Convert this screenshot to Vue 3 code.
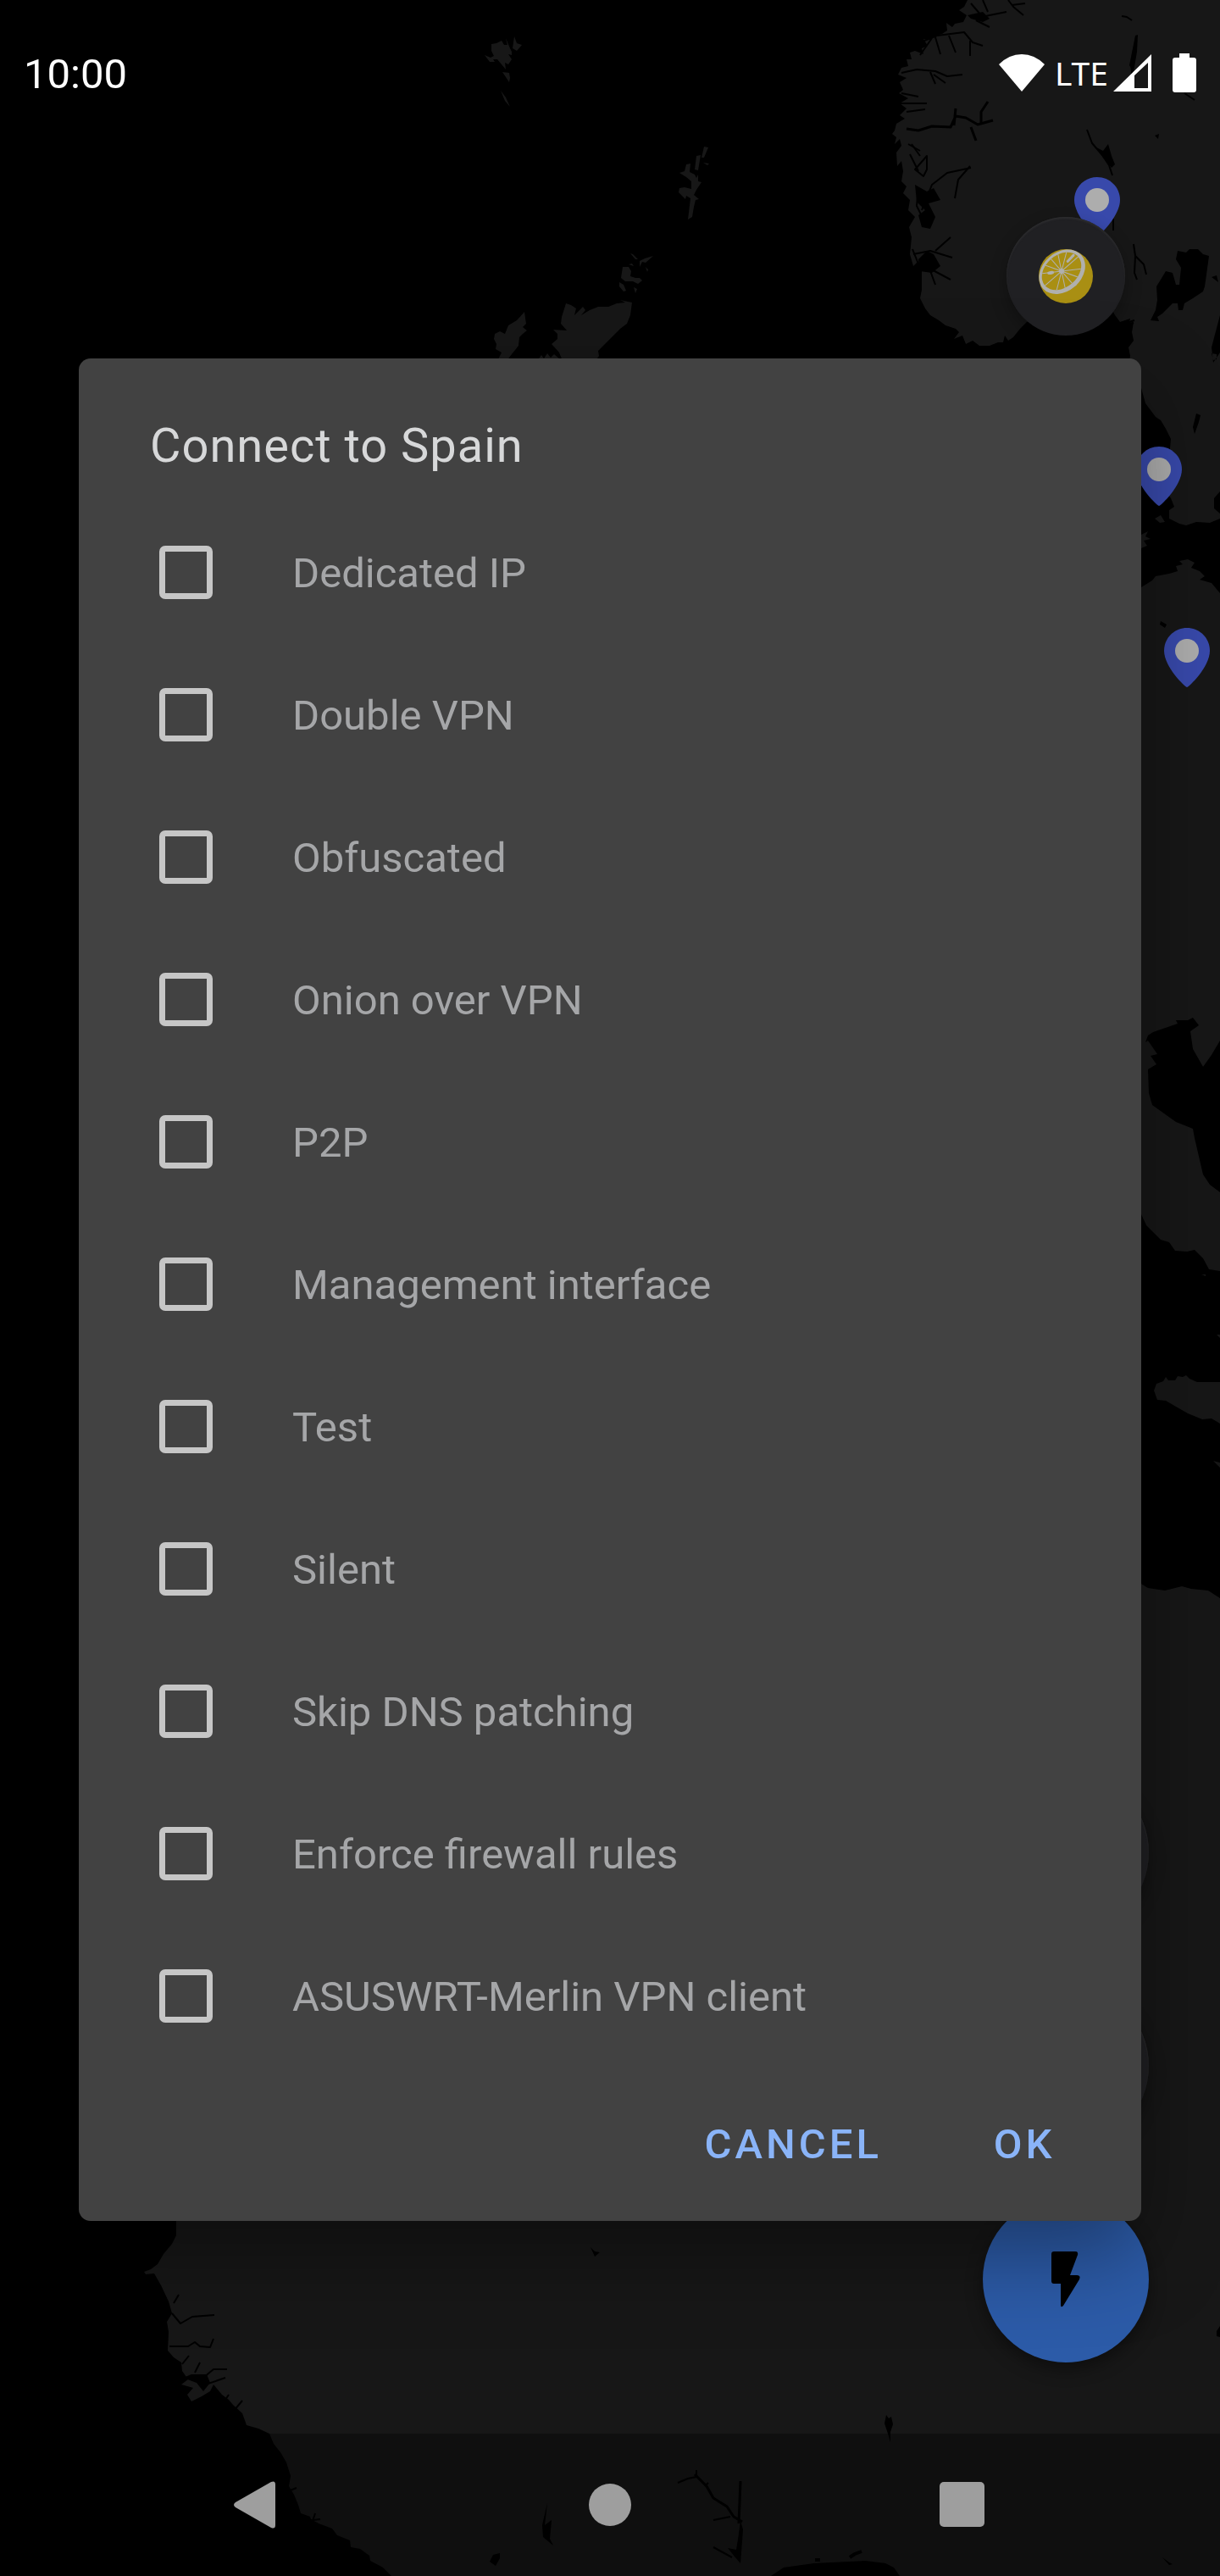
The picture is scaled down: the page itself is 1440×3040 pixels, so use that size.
<script setup>
import { ref } from 'vue'

const options = ref([
  { id: 'dedicated-ip', label: 'Dedicated IP', checked: false },
  { id: 'double-vpn', label: 'Double VPN', checked: false },
  { id: 'obfuscated', label: 'Obfuscated', checked: false },
  { id: 'onion', label: 'Onion over VPN', checked: false },
  { id: 'p2p', label: 'P2P', checked: false },
  { id: 'management', label: 'Management interface', checked: false },
  { id: 'test', label: 'Test', checked: false },
  { id: 'silent', label: 'Silent', checked: false },
  { id: 'skip-dns', label: 'Skip DNS patching', checked: false },
  { id: 'firewall', label: 'Enforce firewall rules', checked: false },
  { id: 'merlin', label: 'ASUSWRT-Merlin VPN client', checked: false },
])

const pins = [
  { x: 1295, y: 236 },
  { x: 1368, y: 554 },
  { x: 1401, y: 768 },
]
</script>

<template>
  <div class="screen">
    <div class="backdrop">
      <svg class="map" viewBox="0 0 1440 3040" preserveAspectRatio="xMaxYMin slice" aria-hidden="true">
        <g class="land">
          <!-- Scandinavia -->
          <path d="M1142 0L1138 8 1132 12 1141 18 1137 26 1127 28 1124 32 1117 27 1118 36 1112 40 1104 42 1098 47 1090 46 1095 54 1088 57 1090 64 1080 60 1074 62 1076 70 1070 70 1072 78 1064 80 1060 88 1070 92 1062 97 1066 106 1061 110 1072 116 1062 122 1070 128 1062 136 1068 140 1058 146 1056 154 1053 158 1058 162 1056 170 1062 164 1064 172 1058 180 1059 196 1064 190 1066 202 1064 214 1070 220 1066 228 1074 236 1072 248 1080 256 1073 268 1076 280 1074 300 1078 314 1084 308 1088 318 1088 342 1086 352 1092 364 1098 372 1108 378 1116 384 1128 388 1132 392 1126 400 1136 396 1140 406 1148 402 1156 408 1168 408 1178 404 1184 404 1186 396 1190 402 1196 398 1204 388 1212 380 1240 364 1310 360 1316 372 1322 380 1328 378 1334 376 1332 382 1338 380 1336 392 1338 402 1332 410 1334 420 1332 430 1347 458 1352 476 1358 484 1364 492 1370 496 1376 506 1382 518 1380 540 1382 552 1386 556 1381 562 1386 568 1376 580 1382 588 1386 598 1380 602 1380 612 1392 618 1400 620 1412 616 1428 617 1440 612V0z" />
          <!-- Continental Europe -->
          <path d="M1347 693L1360 685 1364 680 1380 677 1390 674 1388 668 1396 666 1392 662 1402 660 1410 664 1406 670 1416 674 1422 680 1416 684 1430 688 1440 700V1500L1427 1498 1420 1485 1410 1475 1401 1477 1387 1476 1380 1466 1370 1463 1353 1446 1347 1433z" />
          <path d="M1347 631l8-4-3 6 6 3-8 2 4 6-7 3zM1363 612l7-4 5 8-6 1zM1436 1575h4v4zM1432 1724l8 2v6zM1418 1504h5v2z" />
          <path d="M1362 1641L1365 1633 1373 1630 1376 1625 1379 1629 1387 1629 1390 1624 1396 1625 1400 1623 1404 1627 1413 1631 1440 1631V1680L1430 1674 1419 1675 1402 1668 1388 1660 1376 1653 1366 1652z" />
          <!-- Africa -->
          <path d="M1347 1869L1355 1874 1375 1877 1395 1872 1406 1875 1426 1877 1440 1886V3040H1062L1055 3030 1045 3025 1021 3022 961 3025 925 3030 910 3040H462L452 3030 437 3022 436 3016 425 3008 414 3006 413 2998 398 2992 392 2984 376 2978 367 2973 366 2970 355 2966 352 2956 347 2944 341 2934 343 2922 338 2906 331 2894 323 2884 318 2872 305 2866 291 2862 286 2848 275 2838 270 2832 262 2826 252 2814 248 2822 238 2828 226 2834 221 2826 228 2818 214 2814 222 2808 215 2798 214 2788 205 2782 198 2774 199 2752 197 2740 203 2730 199 2716 190 2697 182 2683 172 2684 170 2681 178 2678 186 2672 193 2660 203 2648 208 2638V2600z" />
          <!-- Faroe Islands -->
          <path d="M572 65l7 3 4-2-3-6 0-8 6-1 6-3 3 5 5 0 4 8 0 4-4-1 4 6-4 6-4-2 1 8-10-12-5 0 2 3-6 0zM600 48l3 6M593 85l8 1 1 6-1 5zM591 107l6 8 5 11-6-7zM607 43l3 8 6 2-6 7-5-3zM597 45l5 12-2 1z" />
          <!-- Shetland -->
          <path d="M831 173l5 1-5 12-3 0zM822 184l5-1-3 18-4-1zM830 192l7 1-2 2zM802 204l6-2 2-8 5-1-1 10 6 3 2 4 2-4 0 8 4 1-6 9-3 6 6 5-4 1-2 8-2 12-5 3 3-25-5-3-1 4-6-6-2-2 1-5 6-1 8 2 0-9-6-5z" />
          <!-- Orkney -->
          <path d="M735 315l7 0 3 5-1 6 6 2 5 0 3 3-5 4-6-3-9 0-5-4zM731 333l5 3 3 7-3 1-5-6zM748 339l4 2-2 5zM744 299l3 1 6 6-3 0zM755 308l6-3 10-3-9 8-4-1-3 6zM762 315l3 3-1 3zM742 312l4-1 2 3z" />
          <!-- Scotland -->
          <path d="M668 358L674 360 680 364 678 372 688 362 691 366 686 372 696 366 706 362 718 362 728 358 738 357 732 354 746 357 744 372 740 382 732 388 722 398 713 407 706 414 707 420 703 426H664L660 416 651 406 658 400 658 394 653 389 669 390 662 382 663 374z" />
          <path d="M619 368L621 382 617 386 622 390 617 394 613 398 612 408 604 418 598 426 588 424 592 416 585 412 586 406 583 400 584 394 590 391 596 394 600 384 610 378zM636 423l3-4 3 4 4-6 4 5 4-4 6 5z" />
        </g>
        <g class="water">
          <path d="M1355 1228L1352 1230 1355 1222 1361 1218 1390 1208 1388 1204 1402 1204 1408 1201 1415 1210 1405 1217 1408 1238 1420 1259 1430 1245 1440 1228V1407L1428 1398 1420 1386 1410 1343 1408 1332 1398 1328 1388 1324 1374 1314 1360 1304 1356 1290 1355 1262 1365 1256 1358 1246 1366 1244z" />
          <path d="M1390 296L1400 298 1404 294 1414 294 1420 300 1427 302 1424 324 1422 338 1420 344 1408 352 1398 358 1396 366 1391 366 1390 358 1384 358 1372 370 1366 374 1368 379 1358 378 1364 366 1366 354 1365 338 1370 330 1376 320 1384 322 1388 336 1392 336 1394 316 1388 306zM1440 372L1430 410 1432 428 1440 416zM1440 580L1433 588 1433 600 1440 606zM1412 488l5 2-2 8-5 14-2-8zM1430 417l6 1 0 6-4 1zM1436 325l-6 2 8 6zM1370 733l7 4-2 4-6-4z" />
          <path d="M1294 174L1302 178 1308 170 1312 184 1316 194 1312 198 1302 186zM1340 42l3-1-1 20-4 24-5-8zM1363 160l5-2-1 6z" />
          <path d="M1440 2745l-4 6 0 6 4 1zM1046 2850l3 4 3-2 2 9-3 9 0 12-3-10-4-12zM1372 3018l8 6 4 2-4 1z" />
          <path d="M1080 218L1094 226 1102 222 1110 236 1096 240 1104 256 1098 270 1088 268 1084 254 1092 248 1082 238zM1084 306L1094 296 1102 300 1110 314 1100 322 1086 320zM1142 18L1160 14 1168 22 1160 26 1146 22zM216 2806L226 2802 244 2802 248 2812 240 2822 232 2812z" />
          <path d="M874 2975l3 10-3 40-7-8-8-10 10 2 2-12zM640 2980l6-26-3 26 8-6-2 22 4 8-12-10zM582 3015l8-2 0 6-5 9-7-5zM697 2652l5 5 6 1-6 5z" />
        </g>
        <g class="fjords">
          <path d="M1070 152l14 2 16-5 22 1 6-13 12 2 14 8 18-5M1126 148l2-20M1158 146l0-14 8-12M1146 150l6 16" stroke-width="3" />
          <path d="M1088 248l12-30 18-14 28-6M1127 234l4-22 14-16M1092 263l-10-20 2-22M1078 300l20-4 26 8M1096 314l8 22M1092 314l30 16M1075 330l10-16-8-20M1104 296l18-16M1076 170l10 14" stroke-width="2" />
          <path d="M1064 86l18-4 22 2 14 6 18-2M1098 85l6 14M1102 88l14 10M1086 50l20-8 32-4 10 12 12 4M1100 45l-14 20M1104 44l6 20M1120 42l8 20M1145 48v18M1150 22l18-4 20-4M1152 24l16 8M1190 0l6 8 12 10M1194 6l16-2M1158 18l-12-14M1166 14l-6-14M1062 122l32 0M1070 132l22-3M1064 110l20 4" stroke-width="2" />
          <path d="M1094 184l-14 16 10 8 4-8zM1072 170l14 8M1074 182l10 20M1324 19l6 1 6 4M1340 62l-5 14 2 18M1283 153l6 16 12 14 8 12 4 12M1314 258v14M1338 288l2 14-1 20 3 8M1340 302l10 10 3 12M1398 110l12 8M1325 410l8-30 6-2M1322 385l16-4M1302 395l-4 14" stroke-width="2" />
          <path d="M203 2730l10 12 14-8 26-2M205 2718l6-10M200 2769h22l8-5 6 5 12 1 4-10M215 2790l8-10M230 2800l6-12M240 2806l12-10 16 0M240 2815l26-9M262 2838l8-12M276 2845l10-12M340 2940l10-4M352 2976l26-3M368 2978l4-12" stroke-width="2" />
          <path d="M800 2930l12-5 10-2 0-8M842 2974l20-4M832 2934l4-4M842 3006l22 12" stroke-width="2" />
          <path d="M820 2920l14 14 8 14 16 10 8 12 10 6M874 2928l-2 50" stroke-width="3" />
          <path d="M1003 3018l6-4 8-3M962 3021h6" stroke-width="4" />
        </g>
        <g v-for="pin in pins" :key="pin.x" :transform="`translate(${pin.x} ${pin.y})`">
          <path class="pin" d="M0-27C-15-27-27-15-27 0C-27 19-2 43 0 43S27 19 27 0C27-15 15-27 0-27z" />
          <circle class="pin-dot" r="14" />
        </g>
      </svg>

      <div class="fabs">
        <button class="fab mini" type="button" aria-label="Lemon">
          <svg width="64" height="64" viewBox="0 0 64 64">
            <circle cx="32" cy="32" r="32" fill="#a98f13" />
            <g transform="rotate(-41 27 26)">
              <ellipse cx="27" cy="27" rx="30" ry="23" fill="#b0b0ae" />
              <ellipse cx="27" cy="26" rx="26" ry="19" fill="#a98f13" />
              <path d="M1 26h52M27 7v38M8 13l38 26M8 39l38-26M17 8l20 36M37 8L17 44" stroke="#b0b0ae" stroke-width="1" />
              <circle cx="27" cy="26" r="3" fill="#b0b0ae" />
              <path d="M40 22l10-1" stroke="#b0b0ae" stroke-width="3" stroke-linecap="round" />
              <ellipse cx="16" cy="19" rx="4" ry="2" fill="#b0b0ae" transform="rotate(30 16 19)" />
            </g>
          </svg>
        </button>
        <button class="fab" type="button" aria-label="Locate"></button>
        <button class="fab" type="button" aria-label="Settings"></button>
        <button class="fab primary" type="button" aria-label="Quick connect">
          <svg width="34" height="66" viewBox="0 0 34 66">
            <path d="M3 0H28Q32 0 31 4L22 28H30Q35 28 33 33L14 64Q11 67 11 63V38H3Q0 38 0 35V3Q0 0 3 0z" />
          </svg>
        </button>
      </div>
    </div>

    <header class="status">
      <time class="clock">10:00</time>
      <div class="indicators">
        <svg class="wifi" width="54" height="46" viewBox="0 0 54 46"><path d="M0 13Q12 1 27 1T54 13L27 45z" /></svg>
        <span class="network">LTE</span>
        <svg class="signal" width="46" height="46" viewBox="0 0 46 46"><path fill-rule="evenodd" d="M0 45L45 1V45zM25 26V41H41V11z" /></svg>
        <svg width="28" height="46" viewBox="0 0 28 46"><path d="M8 0H20V5H25Q28 5 28 8V43Q28 46 25 46H3Q0 46 0 43V8Q0 5 3 5H8z" /></svg>
      </div>
    </header>

    <main class="stage">
      <form class="dialog" role="dialog" aria-labelledby="dialog-title" @submit.prevent>
        <h1 id="dialog-title">Connect to Spain</h1>
        <ul class="options">
          <li v-for="option in options" :key="option.id">
            <label :for="option.id">
              <input :id="option.id" v-model="option.checked" type="checkbox" />
              <span>{{ option.label }}</span>
            </label>
          </li>
        </ul>
        <div class="actions">
          <button type="button">CANCEL</button>
          <button type="submit">OK</button>
        </div>
      </form>
    </main>

    <nav class="navbar">
      <button type="button" aria-label="Back">
        <svg width="56" height="56" viewBox="0 0 56 56"><path d="M2 25L44 1Q49-1 49 4V52Q49 57 44 55L2 31Q-2 28 2 25z" /></svg>
      </button>
      <button type="button" aria-label="Home">
        <svg width="56" height="56" viewBox="0 0 56 56"><circle cx="28" cy="28" r="25" /></svg>
      </button>
      <button type="button" aria-label="Recents">
        <svg width="56" height="56" viewBox="0 0 56 56"><rect x="1" y="1" width="53" height="53" rx="5" /></svg>
      </button>
    </nav>
  </div>
</template>

<style>
body {
  margin: 0;
  background: #000;
}
</style>

<style scoped>
.screen {
  position: relative;
  display: flex;
  flex-direction: column;
  min-height: 100vh;
  overflow: hidden;
  background: #000;
  color: #fff;
  font-family: Roboto, sans-serif;
}

button {
  padding: 0;
  border: 0;
  background: none;
  font: inherit;
}

.backdrop {
  position: absolute;
  inset: 0;
}

.map {
  position: absolute;
  width: 100%;
  height: 100%;
}

.land {
  fill: #171717;
}

.water {
  fill: #000;
}

.fjords {
  fill: none;
  stroke: #000;
  stroke-linejoin: round;
}

.pin {
  fill: #3849ab;
}

.pin-dot {
  fill: #adadad;
}

.fabs {
  position: relative;
  box-sizing: border-box;
  display: flex;
  flex-direction: column;
  align-items: flex-end;
  gap: 56px;
  height: 100%;
  padding: 256px 84px 252px;
}

.fab {
  display: flex;
  align-items: center;
  justify-content: center;
  width: 196px;
  height: 196px;
  border-radius: 50%;
  background: #202023;
  box-shadow: inset 0 2px 2px #2c2c2e, 0 8px 20px rgba(0, 0, 0, 0.3);
}

.fab.mini {
  width: 140px;
  height: 140px;
  margin: 0 28px auto;
}

.fab.primary {
  background: #2c5ba8;
  box-shadow: 0 8px 20px rgba(0, 0, 0, 0.4);
}

.status {
  position: relative;
  box-sizing: border-box;
  display: flex;
  align-items: center;
  justify-content: space-between;
  height: 172px;
  padding: 0 28px;
}

.clock {
  padding-top: 4px;
  font-size: 49px;
  line-height: 56px;
}

.indicators {
  display: flex;
  align-items: center;
  fill: #fff;
}

.network {
  margin: 0 6px 0 12px;
  font-family: "Noto Sans", sans-serif;
  font-size: 39px;
  line-height: 56px;
}

.signal {
  margin-right: 24px;
}

.stage {
  position: relative;
  display: flex;
  flex: 1;
  align-items: center;
  padding: 0 93px;
}

.dialog {
  flex: 1;
  border-radius: 14px;
  background: #424242;
  box-shadow: 0 40px 100px rgba(0, 0, 0, 0.36);
}

h1 {
  margin: 0;
  padding: 70px 84px 32px;
  color: #d7d8d9;
  font-size: 56px;
  font-weight: 400;
  letter-spacing: 1px;
  line-height: 66px;
}

.options {
  margin: 0;
  padding: 0;
  list-style: none;
}

label {
  display: flex;
  align-items: center;
  gap: 94px;
  height: 168px;
  padding: 0 95px;
  color: #a5a6a8;
  font-size: 49px;
  line-height: 56px;
}

label span {
  padding-top: 4px;
}

input {
  appearance: none;
  box-sizing: border-box;
  width: 63px;
  height: 63px;
  margin: 0;
  border: 7px solid #c6c6c6;
  border-radius: 7px;
}

.actions {
  display: flex;
  justify-content: flex-end;
  gap: 28px;
  padding: 28px 26px;
}

.actions button {
  min-width: 224px;
  height: 126px;
  padding: 0 28px;
  color: #8ab4f8;
  font-size: 49px;
  font-weight: 500;
  letter-spacing: 4px;
}

.navbar {
  position: relative;
  display: flex;
  align-items: center;
  justify-content: center;
  height: 168px;
  background: rgba(0, 0, 0, 0.35);
}

.navbar button {
  flex: 0 1 416px;
  height: 168px;
}

.navbar svg {
  display: block;
  margin: 0 auto;
  fill: #9e9e9e;
}
</style>
